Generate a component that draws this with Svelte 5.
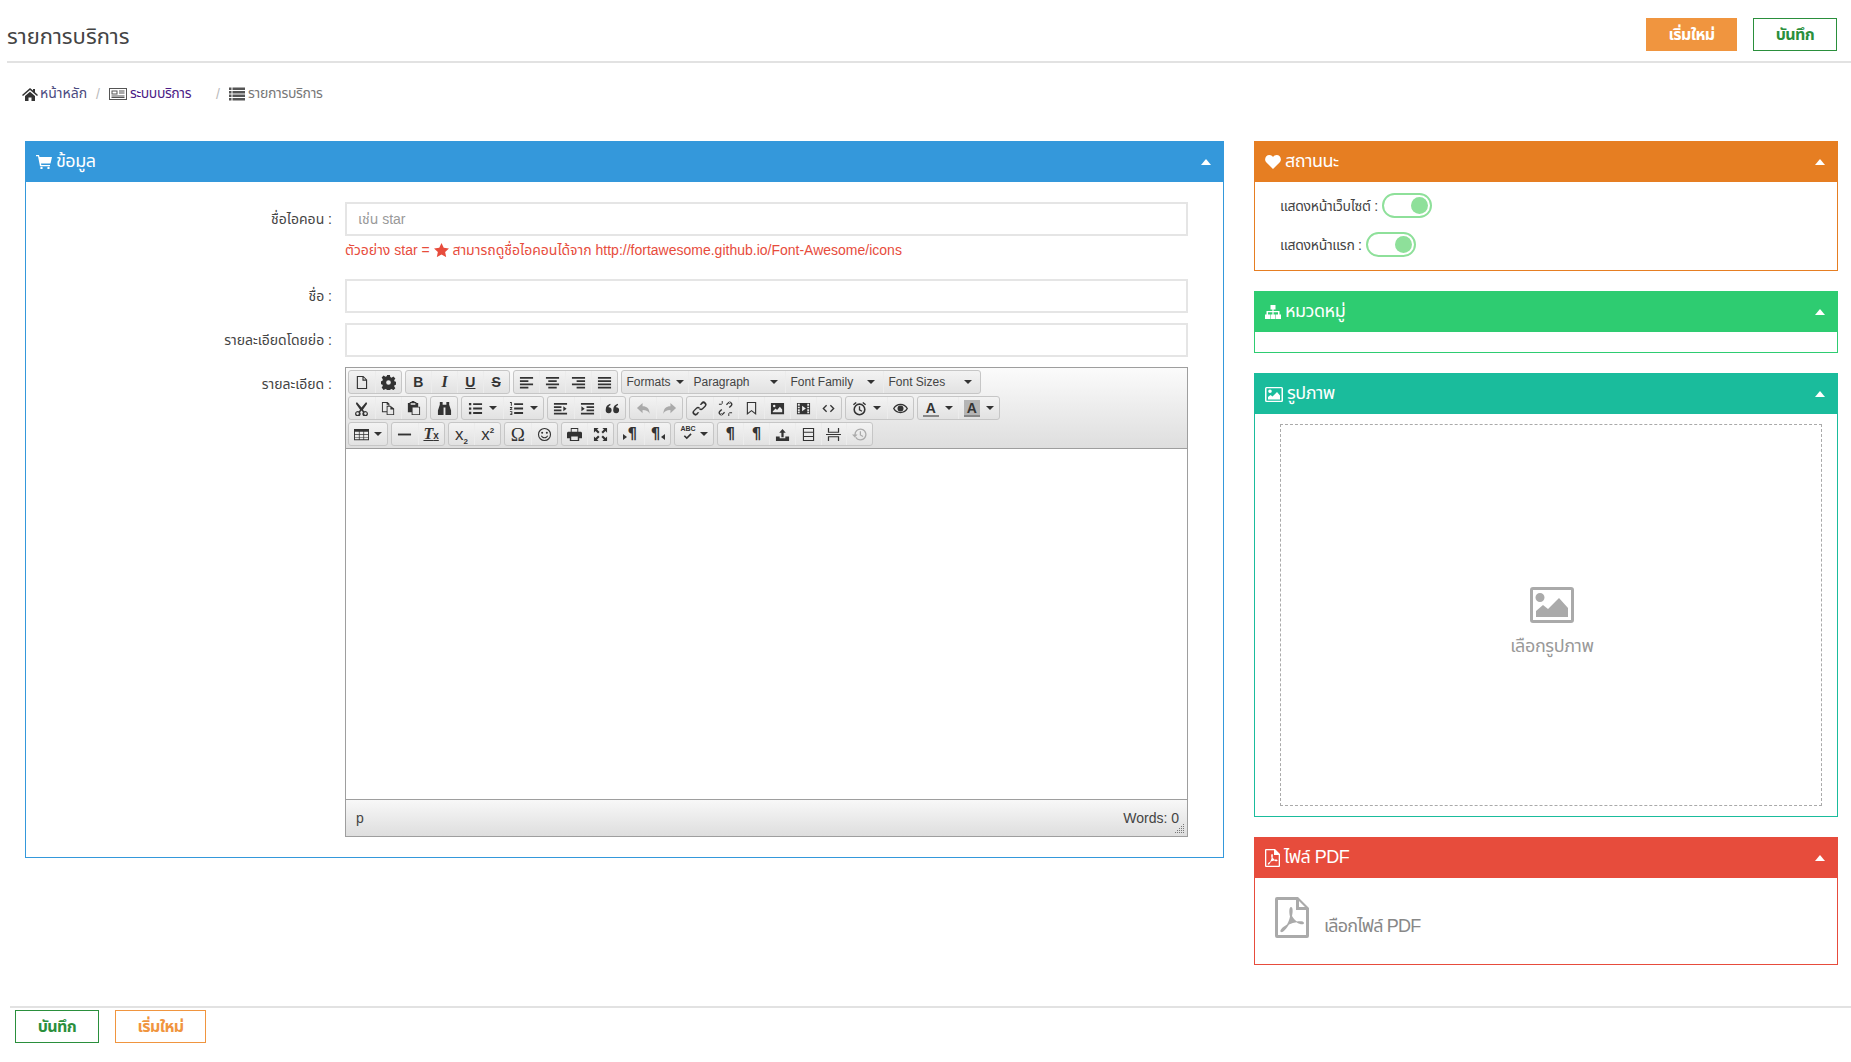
<script>
  const icons = {
    doc: 'M3 1h7l4 4v10H3zM4.200 2.200v11.600h8.600V6H9V2.200zM10.200 2.600V4.800h2.200z',
    gear: 'M6.500 0h3l.4 2.200 1.400.6 1.900-1.300 2.100 2.100-1.300 1.900.6 1.400 2.200.4v3l-2.200.4-.6 1.400 1.300 1.900-2.100 2.100-1.900-1.300-1.400.6-.4 2.200h-3l-.4-2.200-1.400-.6-1.900 1.300L.7 13.400 2 11.500l-.6-1.400-2.200-.4v-3l2.200-.4.6-1.400L.7 2.600 2.800.5l1.900 1.300 1.400-.6zM8 5.500a2.500 2.500 0 1 0 0 5 2.500 2.500 0 0 0 0-5z',
    al: 'M1 2h14v2H1zM1 5.500h9v2H1zM1 9h14v2H1zM1 12.500h9v2H1z',
    ac: 'M1 2h14v2H1zM3.500 5.500h9v2h-9zM1 9h14v2H1zM3.500 12.500h9v2h-9z',
    ar: 'M1 2h14v2H1zM6 5.500h9v2H6zM1 9h14v2H1zM6 12.500h9v2H6z',
    aj: 'M1 2h14v2H1zM1 5.500h14v2H1zM1 9h14v2H1zM1 12.500h14v2H1z',
    cut: 'M3 1l5 6 5-6 1 2-4.500 6.200 1.300 1.700a3 3 0 1 1-1.300 1L8 10l-1.500 1.900a3 3 0 1 1-1.300-1L6.500 9.200 2 3zM3.800 12a1.400 1.400 0 1 0 0 2.800 1.400 1.400 0 0 0 0-2.800zM12.200 12a1.400 1.400 0 1 0 0 2.800 1.400 1.400 0 0 0 0-2.800z',
    copy: 'M1 1h6l2 2v2h1l4 3v7H6v-3H1zM2 2v9h4V5h2V4H6V2zM7 6v8h6V9h-3V6z',
    paste: 'M6 0h3v1h2v1h2v4h2v9H6v-3H2V2h2V1h2zM7 7v7h7V7zM5 2.500h5V4H5z',
    bino: 'M3 1h3v3h4V1h3v3l2 6v5H9V7H7v8H1v-5l2-6z',
    ul: 'M1 2h2.500v2.500H1zM5.500 2.300H15v2H5.500zM1 6.800h2.500v2.500H1zM5.500 7H15v2H5.500zM1 11.500h2.500V14H1zM5.500 11.800H15v2H5.500z',
    ol: 'M1 1h2v4H2V2H1zM5.500 2.300H15v2H5.500zM1 6.500h2.500v1L2 8.800h1.500v.8H1V8.700l1.500-1.300H1zM5.500 7H15v2H5.500zM1 11h2.500v4H1v-.8h1.600v-.8H1.500v-.6h1.100v-1H1zM5.500 11.800H15v2H5.500z',
    outd: 'M1 2h14v2H1zM1 5.500h8v2H1zM1 9h8v2H1zM1 12.500h14v2H1zM11 5.500v5.500l3.500-2.700z',
    ind: 'M1 2h14v2H1zM7 5.500h8v2H7zM7 9h8v2H7zM1 12.500h14v2H1zM1.500 5.500v5.500L5 8.300z',
    quote: 'M4 3a3.500 3.500 0 0 1 3.200 4c0 3-1.900 5-4.700 6l-.5-1.200c1.300-.6 2.100-1.500 2.300-2.400A3 3 0 1 1 4 3zM12 3a3.500 3.500 0 0 1 3.200 4c0 3-1.900 5-4.700 6l-.5-1.200c1.300-.6 2.100-1.500 2.300-2.400A3 3 0 1 1 12 3z',
    undo: 'M7 2v3.500c4.500 0 7.500 2.500 7.500 8-1.200-2.800-3.500-4-7.500-4V13L1 7.500z',
    redo: 'M9 2v3.500c-4.500 0-7.500 2.500-7.500 8 1.200-2.800 3.500-4 7.500-4V13l6-5.500z',
    link: 'M10 1.500a3 3 0 0 1 4.500 4.500l-2.800 2.800a3 3 0 0 1-4.200 0l1-1a1.600 1.600 0 0 0 2.200 0l2.800-2.800a1.600 1.600 0 0 0-2.200-2.200l-1.500 1.500a4 4 0 0 0-1.500-.3zM6 14.500A3 3 0 0 1 1.500 10l2.800-2.800a3 3 0 0 1 4.200 0l-1 1a1.600 1.600 0 0 0-2.200 0L2.500 11a1.600 1.600 0 0 0 2.200 2.200l1.500-1.500a4 4 0 0 0 1.500.3z',
    unlink: 'M10.500 1.500a2.800 2.800 0 0 1 4 4l-2 2-1-1 2-2a1.400 1.400 0 0 0-2-2l-2 2-1-1zM5.500 14.500a2.800 2.800 0 0 1-4-4l2-2 1 1-2 2a1.400 1.400 0 0 0 2 2l2-2 1 1zM1 3h3v1H1zM4 0h1v3H4zM12 12h3v1h-3zM11 13h1v3h-1zM12 1h1v2h-1zM3 13h1v2H3z',
    mark: 'M3 1h10v14l-5-4-5 4zM4.200 2.200v10.200L8 9.500l3.800 2.900V2.200z',
    image: 'M1 2h14v12H1zM4.500 4a1.300 1.300 0 1 0 0 2.600 1.300 1.300 0 0 0 0-2.600zM3 12h10V9l-2.500-3-3 3.500L6 8l-3 3z',
    media: 'M1 2h14v12H1zM2 3v2h2V3zM2 6v1.800h2V6zM2 8.800v1.800h2V8.800zM2 11.300V13h2v-1.700zM12 3v2h2V3zM12 6v1.800h2V6zM12 8.800v1.800h2V8.800zM12 11.300V13h2v-1.700zM6.500 5v6l4-3z',
    code: 'M5.500 4l1 1-3 3 3 3-1 1-4-4zM10.500 4l4 4-4 4-1-1 3-3-3-3z',
    clock: 'M8 2.500a6.500 6.500 0 1 1 0 13 6.500 6.500 0 0 1 0-13zM8 4.200a4.800 4.800 0 1 0 0 9.600 4.800 4.800 0 0 0 0-9.600zM7.300 5.500h1.400V9l2.300 1.300-.7 1.200-3-1.700zM1 3.500L4 1l1 1-3 2.500zM15 3.500L12 1l-1 1 3 2.500z',
    eye: 'M8 3c3.500 0 6.500 2 8 5-1.500 3-4.500 5-8 5s-6.500-2-8-5c1.500-3 4.500-5 8-5zM8 4.300C5.500 4.300 3 5.700 1.600 8 3 10.300 5.500 11.700 8 11.700s5-1.400 6.400-3.700C13 5.700 10.500 4.300 8 4.300zM8 4.800a3.200 3.200 0 1 1 0 6.400 3.200 3.200 0 0 1 0-6.400z',
    table: 'M0 2h16v12H0zM1 5v2.500h4.200V5zM6 5v2.500h4V5zM10.800 5v2.500H15V5zM1 8.300v2.300h4.200V8.300zM6 8.300v2.300h4V8.300zM10.800 8.300v2.300H15V8.300zM1 11.300V13h4.200v-1.700zM6 11.300V13h4v-1.700zM10.800 11.300V13H15v-1.700z',
    hr: 'M1 7h14v2H1z',
    smile: 'M8 1a7 7 0 1 1 0 14A7 7 0 0 1 8 1zM8 2.200a5.800 5.800 0 1 0 0 11.600A5.800 5.800 0 0 0 8 2.200zM5.500 5a1 1 0 1 1 0 2.200 1 1 0 0 1 0-2.200zM10.500 5a1 1 0 1 1 0 2.200 1 1 0 0 1 0-2.200zM4.200 9.500l1-.4c.6 1.100 1.600 1.700 2.800 1.700s2.200-.6 2.800-1.700l1 .4C11 11.100 9.700 12 8 12s-3-.9-3.800-2.500z',
    print: 'M4 1h8v4h3l1 1v6h-3v3H3v-3H0V6l1-1h3zM5 2.200V5h6V2.200zM4.500 10v3.800h7V10z',
    full: 'M1 1h5L4.300 2.700 7 5.400 5.400 7 2.700 4.300 1 6zM15 1v5l-1.700-1.700L10.600 7 9 5.400l2.700-2.700L10 1zM1 15v-5l1.700 1.700L5.400 9 7 10.600l-2.700 2.700L6 15zM15 15h-5l1.700-1.700L9 10.600 10.600 9l2.700 2.700L15 10z',
    check: 'M3 7l1.500-1.500L7 8l5-5 1.500 1.500L7 11z',
    upload: 'M1 10h4v2h6v-2h4v5H1zM8 2l3.500 4H9.200v5H6.800V6H4.500z',
    tpl: 'M2 1h12v14H2zM3.200 2.200V5h9.600V2.200zM3.200 6.200v3.300h9.600V6.200zM3.200 10.700v3.100h9.600v-3.100z',
    brk: 'M2 1h1.300v4h9.400V1H14v5.200H2zM0 7.500h16v1H0zM2 15v-5.200h12V15h-1.300v-4H3.300v4z',
    restore: 'M9 1.500a6.500 6.500 0 1 1-5.600 9.800l1.200-.7A5.100 5.100 0 1 0 3.900 8H6L3 11.200 0 8h2.500A6.500 6.500 0 0 1 9 1.500zM8.300 4.500h1.300v3.700l2.400 1.400-.6 1-3.100-1.800z'
  };
  const B = (i, extra = {}) => ({ i, ...extra });
  const T = (t, c) => ({ t, c });
  const rows = [
    [
      [B('doc'), B('gear')],
      [T('B', 'bold'), T('I', 'ital'), T('U', 'under'), T('S', 'strike')],
      [B('al'), B('ac'), B('ar'), B('aj')],
      [{ l: 'Formats', w: 66, pr: 4 }, { l: 'Paragraph', w: 97, pr: 7 }, { l: 'Font Family', w: 98, pr: 8 }, { l: 'Font Sizes', w: 97, pr: 8 }]
    ],
    [
      [B('cut'), B('copy'), B('paste')],
      [B('bino')],
      [B('ul', { caret: 1 }), B('ol', { caret: 1 })],
      [B('outd'), B('ind'), B('quote', { flip: 1 })],
      [B('undo', { dim: 1 }), B('redo', { dim: 1 })],
      [B('link'), B('unlink'), B('mark'), B('image'), B('media'), B('code')],
      [B('clock', { caret: 1 }), B('eye')],
      [{ t: 'A', c: 'fc', caret: 1 }, { t: 'A', c: 'bc', caret: 1 }]
    ],
    [
      [B('table', { caret: 1, narrow: 1 })],
      [B('hr'), { t: 'T', c: 'clear' }],
      [{ t: 'x', sub: '2', c: 'script' }, { t: 'x', sup: '2', c: 'script' }],
      [T('Ω', 'omega'), B('smile')],
      [B('print'), B('full')],
      [T('¶', 'para ltr'), T('¶', 'para rtl')],
      [B('check', { caret: 1, narrow: 1, abc: 1 })],
      [T('¶', 'para'), T('¶', 'para'), B('upload'), B('tpl'), B('brk'), B('restore', { dim: 1 })]
    ]
  ];
</script>

{#snippet caret()}<i class="caret"></i>{/snippet}

<div class="page">
  <header class="top">
    <h1>รายการบริการ</h1>
    <div class="actions">
      <button class="btn solid-orange">เริ่มใหม่</button>
      <button class="btn line-green wide-s">บันทึก</button>
    </div>
  </header>

  <nav class="crumb">
    <svg class="ci home" viewBox="0 0 16 14"><path d="M8 1l3 2.500V2h2v3.200L16 8l-1 1-7-6-7 6-1-1zM3 9l5-4.300L13 9v5H9.500v-3.500h-3V14H3z"/></svg>
    <span class="c-link">หน้าหลัก</span>
    <span class="sep">/</span>
    <svg class="ci news" viewBox="0 0 18 14"><path fill-rule="evenodd" d="M0 1h18v12H0zM1 2v10h16V2zM2.500 3.500h6v4h-6zM3.500 4.500v2h4v-2zM10 3.500h5.500v1H10zM10 5.500h5.500v1H10zM2.500 8.500h13v1h-13zM2.500 10h13v1h-13z"/></svg>
    <span class="c-active">ระบบบริการ</span>
    <span class="sep far">/</span>
    <svg class="ci lines" viewBox="0 0 16 13"><path d="M0 0h2.500v2.500H0zM3.500 0H16v2.500H3.500zM0 3.500h2.500V6H0zM3.500 3.500H16V6H3.500zM0 7h2.500v2.500H0zM3.500 7H16v2.500H3.500zM0 10.500h2.500V13H0zM3.500 10.500H16V13H3.500z"/></svg>
    <span class="c-last">รายการบริการ</span>
  </nav>

  <main class="content">
    <section class="panel blue">
      <div class="phead">
        <svg class="hi" viewBox="0 0 16 14"><path d="M0 0h3l.5 2H16l-1.500 6.500H5l.3 1.500H14v1.300H4L2 1.300H0z"/><circle cx="5.500" cy="13" r="1.200"/><circle cx="12.500" cy="13" r="1.200"/></svg>
        <span>ข้อมูล</span><i class="up"></i>
      </div>
      <div class="form">
        <label for="f1">ชื่อไอคอน :</label>
        <div>
          <input id="f1" placeholder="เช่น star" />
          <p class="help">ตัวอย่าง star = <svg class="star" viewBox="0 0 16 15"><path d="M8 0l2.400 5.100 5.600.7-4.100 3.800 1.100 5.500L8 12.400 3 15.100l1.100-5.500L0 5.800l5.600-.7z"/></svg> สามารถดูชื่อไอคอนได้จาก http://fortawesome.github.io/Font-Awesome/icons</p>
        </div>
        <label for="f2">ชื่อ :</label>
        <input id="f2" />
        <label for="f3">รายละเอียดโดยย่อ :</label>
        <input id="f3" />
        <label for="f4">รายละเอียด :</label>
        <div class="editor" id="f4">
          <div class="toolbar">
            {#each rows as row}
              <div class="trow">
                {#each row as group}
                  <div class="group">
                    {#each group as b}
                      {#if b.l}
                        <div class="tb list" style="width:{b.w}px;padding-right:{b.pr}px"><span>{b.l}</span>{@render caret()}</div>
                      {:else}
                        <div class="tb" class:split={b.caret} class:narrow={b.narrow} class:dim={b.dim}>
                          {#if b.i}
                            <span class="icwrap">
                              {#if b.abc}<span class="abc">ABC</span>{/if}
                              <svg class="ti" class:low={b.abc} class:flip={b.flip} viewBox="0 0 16 16"><path fill-rule="evenodd" d={icons[b.i]}/></svg>
                            </span>
                          {:else}
                            <span class="glyph {b.c}">{b.t}{#if b.sub}<sub>{b.sub}</sub>{/if}{#if b.sup}<sup>{b.sup}</sup>{/if}{#if b.c === 'clear'}<small>x</small>{/if}</span>
                          {/if}
                          {#if b.caret}{@render caret()}{/if}
                        </div>
                      {/if}
                    {/each}
                  </div>
                {/each}
              </div>
            {/each}
          </div>
          <div class="area"></div>
          <div class="status">
            <span>p</span><span>Words: 0</span>
            <svg class="grip" viewBox="0 0 10 10"><path fill="#777" d="M8 0h1v1H8zM6 2h1v1H6zM8 2h1v1H8zM4 4h1v1H4zM6 4h1v1H6zM8 4h1v1H8zM2 6h1v1H2zM4 6h1v1H4zM6 6h1v1H6zM8 6h1v1H8zM0 8h1v1H0zM2 8h1v1H2zM4 8h1v1H4zM6 8h1v1H6zM8 8h1v1H8z"/></svg>
          </div>
        </div>
      </div>
    </section>

    <aside class="side">
      <section class="panel orange">
        <div class="phead">
          <svg class="hi" viewBox="0 0 16 14"><path d="M8 14L1.200 7.200A4 4 0 0 1 .1 4.400C.1 1.900 2 0 4.300 0 5.900 0 7.200.9 8 2c.8-1.100 2.100-2 3.700-2 2.300 0 4.200 1.900 4.200 4.400 0 1-.4 2-1.100 2.800z"/></svg>
          <span>สถานนะ</span><i class="up"></i>
        </div>
        <div class="switches">
          <div class="swrow"><span>แสดงหน้าเว็บไซต์ :</span><span class="switch"><i></i></span></div>
          <div class="swrow"><span>แสดงหน้าแรก :</span><span class="switch"><i></i></span></div>
        </div>
      </section>

      <section class="panel green">
        <div class="phead">
          <svg class="hi" viewBox="0 0 16 14"><path d="M5.500 0h5v4.500H8.600V6h5.900v3.500H16V14h-5V9.500h2V7.300H8.600v2.200H10.500V14h-5V9.500h1.900V7.300H3v2.200h2V14H0V9.500h1.500V6h5.900V4.500H5.500z"/></svg>
          <span>หมวดหมู่</span><i class="up"></i>
        </div>
        <div class="empty"></div>
      </section>

      <section class="panel teal">
        <div class="phead">
          <svg class="hi pic" viewBox="0 0 18 15"><path fill-rule="evenodd" d="M1.500 0h15A1.500 1.500 0 0 1 18 1.500v12a1.500 1.500 0 0 1-1.500 1.500h-15A1.500 1.500 0 0 1 0 13.500v-12A1.500 1.500 0 0 1 1.500 0zM1.500 1.200v12.600h15V1.200zM5 2.500a1.800 1.800 0 1 1 0 3.600 1.800 1.800 0 0 1 0-3.600zM3 12.500V10l2.500-2 2 1.500L12 5l3 3.500v4z"/></svg>
          <span>รูปภาพ</span><i class="up"></i>
        </div>
        <div class="dropwrap">
          <div class="drop">
            <svg class="bigpic" viewBox="0 0 44 36"><path fill="#aaa" fill-rule="evenodd" d="M3 0h38a3 3 0 0 1 3 3v30a3 3 0 0 1-3 3H3a3 3 0 0 1-3-3V3a3 3 0 0 1 3-3zM3 3v30h38V3zM10 6a4.500 4.500 0 1 1 0 9 4.500 4.500 0 0 1 0-9zM6 30v-6l7-6 5 4L29 11l9 10v9z"/></svg>
            <span>เลือกรูปภาพ</span>
          </div>
        </div>
      </section>

      <section class="panel red">
        <div class="phead">
          <svg class="hi pdf" viewBox="0 0 15 18"><path fill-rule="evenodd" d="M1 0h9l5 5v12a1 1 0 0 1-1 1H1a1 1 0 0 1-1-1V1a1 1 0 0 1 1-1zM1.300 1.300v15.400h12.400V6H9V1.300zM7 5c1 0 1 1.500.6 3.500.6 1 1.300 1.700 2 2.200 1.500-.2 3-.1 3 .9 0 1-1.700.8-3.300-.2-1.100.2-2.300.5-3.400 1C5 14.500 3.800 16 3 15.500c-.9-.6.500-2 2.300-3 .6-1.100 1-2.300 1.300-3.400C6 7.500 6 5 7 5z"/></svg>
          <span>ไฟล์ PDF</span><i class="up"></i>
        </div>
        <div class="pdfbody">
          <svg class="bigpdf" viewBox="0 0 34 41"><path fill="#aaa" fill-rule="evenodd" d="M2 0h21l11 11v28a2 2 0 0 1-2 2H2a2 2 0 0 1-2-2V2a2 2 0 0 1 2-2zM3 3v35h28V13H21V3zM24 4v6h6zM16 10c2 0 2 5 1 9 1.500 2.500 3 4.200 5 5.500 3-.4 7-.3 7 1.500 0 2-4 1.700-7.500-.7-2.500.4-5 1.100-7.500 2.200C11 32 8 36 6 35c-2-1.200 1-4.500 6-7.500 1.500-2.700 2.500-5.500 3-8C14 15.500 14 10 16 10z"/></svg>
          <span>เลือกไฟล์ PDF</span>
        </div>
      </section>
    </aside>
  </main>

  <footer class="foot">
    <button class="btn line-green wide-s">บันทึก</button>
    <button class="btn line-orange">เริ่มใหม่</button>
  </footer>
</div>

<style>
  :global(body) {
    margin: 0;
    background: #fff;
    color: #333;
    font-family: "Liberation Sans", "Noto Sans Thai", "Noto Sans", sans-serif;
    font-size: 14px;
    font-stretch: 75%;
  }
  .page { width: 1851px; height: 1062px; overflow: hidden; }

  .top {
    height: 61px;
    margin-left: 7px;
    border-bottom: 2px solid #e2e2e2;
    display: flex;
    align-items: center;
    justify-content: space-between;
    padding-right: 14px;
  }
  h1 { margin: 0; padding-top: 12px; font-size: 22px; font-weight: 400; color: #444; line-height: 1; }
  .actions { display: flex; gap: 16px; padding-top: 8px; }
  .btn {
    height: 33px;
    box-sizing: border-box;
    width: 91px;
    padding: 0;
    font: 700 16px "Liberation Sans", "Noto Sans Thai", "Noto Sans", sans-serif;
    font-stretch: 75%;
    letter-spacing: -.6px;
    background: #fff;
    border: 1px solid;
  }
  .wide-s { width: 84px; }
  .solid-orange { background: #f0953f; border-color: #f0953f; color: #fff; }
  .line-green { border-color: #2a8f3c; color: #2a8f3c; }
  .line-orange { border-color: #f0953f; color: #f0953f; }

  .crumb {
    height: 61px;
    padding-left: 22px;
    display: flex;
    align-items: center;
    font-size: 14px;
    color: #777;
  }
  .ci { fill: #333; height: 14px; flex: none; }
  .home { width: 16px; margin-right: 2px; }
  .news { width: 18px; fill: #555; margin-right: 3px; }
  .lines { width: 16px; fill: #555; margin-right: 3px; }
  .c-link { color: #4a4a80; }
  .c-active { color: #4b1a86; letter-spacing: -.4px; }
  .c-last { color: #777; letter-spacing: -.3px; }
  .sep { color: #bbb; margin: 0 9px; }
  .sep.far { margin: 0 9px 0 25px; }

  .content {
    height: 882px;
    box-sizing: border-box;
    padding: 17px 13px 0 25px;
    display: grid;
    grid-template-columns: 1199px 584px;
    column-gap: 30px;
    align-items: start;
  }
  .panel { border: 1px solid var(--c); box-sizing: border-box; background: #fff; }
  .blue { --c: #3498db; height: 717px; }
  .orange { --c: #e67e22; height: 130px; }
  .green { --c: #2ecc71; height: 62px; }
  .teal { --c: #1abc9c; height: 444px; }
  .red { --c: #e74c3c; height: 128px; }
  .phead {
    height: 40px;
    background: var(--c);
    color: #fff;
    display: flex;
    align-items: center;
    padding: 0 10px;
    font-size: 18px;
    gap: 4px;
    letter-spacing: -.5px;
  }
  .phead span { flex: 1; padding-bottom: 2px; }
  .hi { width: 16px; height: 14px; fill: #fff; flex: none; }
  .pic { width: 18px; height: 15px; }
  .pdf { width: 15px; height: 18px; }
  .up {
    width: 0;
    height: 0;
    border: 5px solid transparent;
    border-top: 0;
    border-bottom: 6px solid #fff;
    margin-right: 2px;
  }

  .form {
    display: grid;
    grid-template-columns: 306px 843px;
    column-gap: 13px;
    row-gap: 10px;
    padding-top: 20px;
    align-items: start;
  }
  label { text-align: right; font-size: 14px; line-height: 34px; color: #444; }
  input {
    display: block;
    width: 100%;
    box-sizing: border-box;
    height: 34px;
    padding: 0 11px;
    border: 2px solid #e5e5e5;
    font: 14px "Liberation Sans", "Noto Sans Thai", "Noto Sans", sans-serif;
    font-stretch: 75%;
    outline: 0;
  }
  input::placeholder { color: #999; }
  .help {
    margin: 4px 0 9px;
    height: 20px;
    line-height: 20px;
    font-size: 14px;
    color: #e74c3c;
    white-space: nowrap;
  }
  .star { width: 15px; height: 14px; fill: #e74c3c; vertical-align: -2px; }

  .editor {
    height: 470px;
    box-sizing: border-box;
    border: 1px solid #9e9e9e;
    display: flex;
    flex-direction: column;
    font-family: "Liberation Sans", Arial, sans-serif;
  }
  .toolbar {
    height: 81px;
    flex: none;
    box-sizing: border-box;
    padding: 2px 0 0 2px;
    background: linear-gradient(#fbfbfb, #dedede);
    border-bottom: 1px solid #9e9e9e;
    display: flex;
    flex-direction: column;
    gap: 2px;
  }
  .trow { display: flex; gap: 2px; height: 24px; }
  .group {
    display: flex;
    border: 1px solid #c6c6c6;
    border-radius: 3px;
    background: linear-gradient(#f3f3f3, #e2e2e2);
    box-sizing: border-box;
    margin-right: 1px;
  }
  .tb {
    width: 25.750px;
    height: 100%;
    box-sizing: border-box;
    display: flex;
    align-items: center;
    justify-content: center;
    color: #333;
    border-left: 1px solid #ececec;
  }
  .group .tb:first-child { border-left: 0; }
  .tb.split { width: 40.500px; gap: 6px; }
  .tb.narrow { width: 38px; gap: 5px; }
  .tb.dim { color: #aaa; }
  .tb.list { justify-content: space-between; padding-left: 5px; font-size: 12px; color: #444; }
  .icwrap { position: relative; display: flex; }
  .ti { width: 15px; height: 15px; fill: currentColor; display: block; }
  .ti.flip { transform: rotate(180deg); }
  .ti.low { margin-top: 5px; height: 12px; }
  .abc { position: absolute; top: -1px; left: 1px; font-size: 7px; line-height: 8px; font-weight: 700; color: #333; }
  .caret {
    width: 0;
    height: 0;
    border: 4px solid transparent;
    border-bottom: 0;
    border-top: 4px solid #333;
    flex: none;
  }
  .glyph { font-size: 14px; color: #333; line-height: 1; position: relative; }
  .bold { font-weight: 700; }
  .ital { font-style: italic; font-family: "Liberation Serif", serif; font-size: 16px; font-weight: 700; }
  .under { text-decoration: underline; font-weight: 700; }
  .strike { text-decoration: line-through; font-weight: 700; }
  .fc, .bc { font-weight: 700; font-size: 14px; padding: 1px 3px 0; border-bottom: 2px solid #888; }
  .bc { background: #b5b5b5; }
  .clear { font-family: "Liberation Serif", serif; font-style: italic; font-weight: 700; font-size: 16px; text-decoration: underline; }
  .clear small { font-size: 10px; font-style: normal; font-family: "Liberation Sans", sans-serif; }
  .script { font-size: 17px; }
  .script sub, .script sup { font-size: 8px; font-weight: 700; line-height: 0; }
  .omega { font-family: "Liberation Serif", serif; font-size: 19px; }
  .para { font-size: 15px; font-weight: 700; font-family: "DejaVu Sans", sans-serif; font-stretch: normal; }
  .ltr::before, .rtl::after {
    content: "";
    position: absolute;
    bottom: 2px;
    border: 3px solid transparent;
  }
  .ltr { padding-left: 3px; }
  .rtl { padding-right: 3px; }
  .ltr::before { left: -2px; border-left: 4px solid #333; border-right: 0; }
  .rtl::after { right: -2px; border-right: 4px solid #333; border-left: 0; }

  .area { flex: 1; background: #fff; }
  .status {
    height: 37px;
    flex: none;
    position: relative;
    box-sizing: border-box;
    border-top: 1px solid #9e9e9e;
    background: linear-gradient(#f8f8f8, #dedede);
    display: flex;
    align-items: center;
    justify-content: space-between;
    padding: 0 8px 0 10px;
    font-size: 14px;
    color: #444;
  }
  .grip { position: absolute; right: 2px; bottom: 2px; width: 10px; height: 10px; }

  .side { display: flex; flex-direction: column; gap: 20px; }
  .switches { padding: 11px 25px; display: flex; flex-direction: column; gap: 14px; }
  .swrow { display: flex; align-items: center; gap: 4px; height: 25px; color: #444; letter-spacing: -.3px; }
  .swrow > span:first-child { padding-top: 2px; }
  .switch {
    width: 50px;
    height: 25px;
    box-sizing: border-box;
    border: 2px solid #8ee09a;
    border-radius: 13px;
    display: flex;
    align-items: center;
    justify-content: flex-end;
    padding-right: 2px;
  }
  .switch i { width: 17px; height: 17px; border-radius: 50%; background: #8ee09a; }
  .empty { height: 20px; }
  .dropwrap { padding: 10px 15px 10px 25px; }
  .drop {
    height: 382px;
    box-sizing: border-box;
    border: 1px dashed #aaa;
    display: flex;
    flex-direction: column;
    align-items: center;
    padding-top: 162px;
    padding-left: 2px;
    gap: 10px;
    color: #999;
    font-size: 18px;
    letter-spacing: -.4px;
  }
  .bigpic { width: 44px; height: 36px; }
  .pdfbody {
    padding: 19px 0 0 20px;
    display: flex;
    align-items: flex-end;
    gap: 15px;
    font-size: 18px;
    color: #888;
    letter-spacing: -.8px;
  }
  .pdfbody span { position: relative; top: 2px; }
  .bigpdf { width: 34px; height: 41px; }

  .foot {
    margin-left: 10px;
    border-top: 2px solid #e2e2e2;
    padding: 2px 0 0 5px;
    display: flex;
    gap: 16px;
  }
</style>
